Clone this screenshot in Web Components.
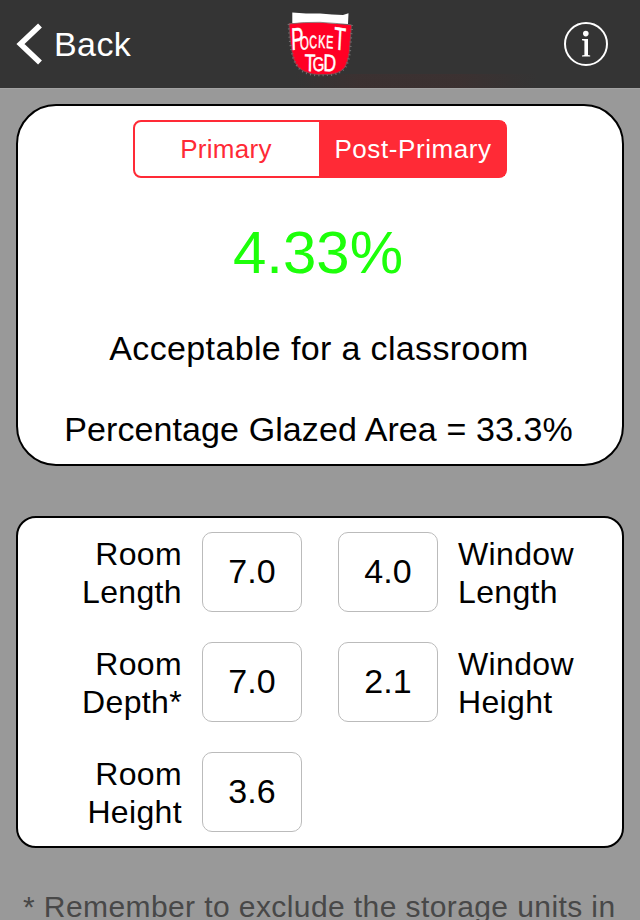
<!DOCTYPE html>
<html lang="en">
<head>
<meta charset="utf-8">
<title>Pocket TGD</title>
<style>
html,body{margin:0;height:920px;overflow:hidden;background:#999}
body{font-family:"Liberation Sans",Arial,sans-serif;color:#000}
</style>
</head>
<body>
<pocket-app></pocket-app>
<script>
const define = (name, html) => customElements.define(name, class extends HTMLElement {
  constructor() {
    super();
    const t = document.createElement('template');
    t.innerHTML = html;
    this.attachShadow({ mode: 'open' }).append(t.content.cloneNode(true));
  }
});

define('back-button', `
<style>
:host{display:flex;align-items:center;color:#fff;font-size:34px;line-height:40px;letter-spacing:.4px}
svg{display:block;width:26px;height:42px;margin-right:12px}
</style>
<svg viewBox="0 0 26 42"><path d="M24 2.5 4.5 21 24 39.5" fill="none" stroke="#fff" stroke-width="5.6"/></svg><slot></slot>`);

define('pocket-logo', `
<style>
:host{display:block;width:70px;height:70px}
svg{display:block;overflow:visible}
text{fill:#fff;stroke:#fff;stroke-width:.5;font-family:"Liberation Sans",Arial,sans-serif}
</style>
<svg width="70" height="70" viewBox="17 10 70 70">
<path d="M22.3 12.6 36 13.5 50 13.5 62 14.6 73 15 78.5 13.3 78 24 22.3 23.5Z" fill="#fff"/>
<path d="M19 23.5Q34 22.2 50 22.5 66 23.5 81.5 25 81 38 79.5 50 78.5 62 74.5 68 69 74 60 74.2L48 74.5Q37 74 31 69.5 23.5 65 22 52 20 38 19 23.5Z" fill="#ff0024"/>
<path d="M18.6 24Q34 22 50 22.3 66 23.3 81.5 24.8" fill="none" stroke="#77706f" stroke-width=".8"/>
<path d="M18.8 24Q19.5 45 23 57 26 67 33 71.5 41 75.5 50 75.2L61 74.9Q71 73.5 75.8 66.5 80 58 80.5 44L82 25" fill="none" stroke="#777" stroke-width="2.2" stroke-dasharray="1 3.2"/>
<path d="M19 24Q20 45 23 56 26 67 33 70.7 41 75 50 74.7L61 74.4Q71 73 75 66.5 79.5 58 80 44L81.5 25" fill="none" stroke="#7b5056" stroke-width=".7"/>
<text transform="scale(.6 1)"><tspan x="36" y="50" rotate="-3" font-size="31">P</tspan><tspan x="50.5" y="50" rotate="-4" font-size="19">O</tspan><tspan x="66" y="48.5" rotate="-3" font-size="18">C</tspan><tspan x="80" y="47.5" rotate="3" font-size="18">K</tspan><tspan x="93.5" y="48" rotate="3" font-size="18">E</tspan><tspan x="106" y="49" rotate="5" font-size="32">T</tspan></text>
<text transform="scale(.74 1)"><tspan x="46.5" y="71" rotate="1" font-size="24">T</tspan><tspan x="58" y="71.5" rotate="-3" font-size="20">G</tspan><tspan x="72" y="71" rotate="1" font-size="24">D</tspan></text>
</svg>`);

define('info-button', `
<style>
:host{display:flex;box-sizing:border-box;width:44px;height:44px;border:2px solid #fff;border-radius:50%;align-items:center;justify-content:center}
svg{display:block}
</style>
<svg width="40" height="40" viewBox="0 0 40 40" fill="#fff"><circle cx="19.8" cy="9.6" r="2.8"/><path d="M16 15h6v16l2.2.4v1H16v-1l2.4-.4V16.7L16 16.2Z"/></svg>`);

define('nav-bar', `
<style>
:host{display:grid;grid-template-columns:1fr auto 1fr;height:88px;box-sizing:border-box;padding:0 32px 0 16px;align-items:center;
background:linear-gradient(90deg,transparent 46%,#4a2c2c55 56%,#4a2c2c55 72%,transparent 84%) 0 100%/100% 14px no-repeat,#343434;box-shadow:0 1px #a3a3a3}
back-button{height:88px}
pocket-logo{margin-left:20px;margin-top:2px}
info-button{justify-self:end}
</style>
<back-button>Back</back-button><pocket-logo></pocket-logo><info-button></info-button>`);

define('segment-control', `
<style>
:host{display:grid;grid-template-columns:184px 1fr;box-sizing:border-box;width:374px;height:58px;border:2px solid #ff2a36;border-radius:8px;color:#ff2a36;font-size:26px;line-height:54px;text-align:center;letter-spacing:.3px}
.first{padding-right:2px}
.on{background:#ff2a36;color:#fff;letter-spacing:.58px;padding-left:2px}
</style>
<div class="first"><slot name="first"></slot></div><div class="on"><slot name="second"></slot></div>`);

define('round-panel', `
<style>:host{display:block;box-sizing:border-box;background:#fff;border:2px solid #000;border-radius:var(--radius,20px)}</style><slot></slot>`);

define('result-summary', `
<style>
:host{display:flex;flex-direction:column;align-items:center;padding-top:14px}
.value{font-size:60px;line-height:70px;color:#1dff0a;margin-top:40px;padding-right:4px}
.line{font-size:34px;line-height:40px;white-space:nowrap}
.verdict{margin-top:40px;letter-spacing:.36px;padding-right:2px}
.glazed{margin-top:41px;letter-spacing:.1px;padding-right:3px}
</style>
<slot name="mode"></slot>
<div class="value"><slot name="value"></slot></div>
<div class="line verdict"><slot name="verdict"></slot></div>
<div class="line glazed"><slot name="glazed"></slot></div>`);

define('measure-field', `
<style>
:host{display:flex;height:80px;gap:20px;align-items:center}
:host([trailing]){flex-direction:row-reverse;justify-content:flex-end}
.label{width:164px;text-align:right;font-size:32px;line-height:38px;letter-spacing:.35px;padding-top:2px}
:host([trailing]) .label{width:auto;text-align:left}
.box{box-sizing:border-box;width:100px;height:80px;border:1px solid #bbb;border-radius:10px;text-align:center;font-size:34px;line-height:76px;flex:none}
</style>
<div class="label"><slot></slot></div><div class="box"><slot name="value"></slot></div>`);

define('measure-grid', `
<style>:host{display:grid;grid-template-columns:284px 1fr;column-gap:36px;row-gap:30px;padding-top:14px}</style><slot></slot>`);

define('pocket-app', `
<style>
:host{display:flex;flex-direction:column;width:640px;height:920px;overflow:hidden}
main{padding:16px 16px 0;display:flex;flex-direction:column}
.result{height:362px;--radius:40px}
.measures{height:332px;margin-top:50px}
.note{margin-top:42px;padding-left:7px;font-size:30px;line-height:34px;letter-spacing:.41px;color:#484848;white-space:nowrap}
</style>
<nav-bar></nav-bar>
<main>
<round-panel class="result"><result-summary>
<segment-control slot="mode"><span slot="first">Primary</span><span slot="second">Post-Primary</span></segment-control>
<span slot="value">4.33%</span><span slot="verdict">Acceptable for a classroom</span><span slot="glazed">Percentage Glazed Area = 33.3%</span>
</result-summary></round-panel>
<round-panel class="measures"><measure-grid>
<measure-field>Room<br>Length<span slot="value">7.0</span></measure-field>
<measure-field trailing>Window<br>Length<span slot="value">4.0</span></measure-field>
<measure-field>Room<br>Depth*<span slot="value">7.0</span></measure-field>
<measure-field trailing>Window<br>Height<span slot="value">2.1</span></measure-field>
<measure-field>Room<br>Height<span slot="value">3.6</span></measure-field>
</measure-grid></round-panel>
<div class="note">* Remember to exclude the storage units in</div>
</main>`);
</script>
</body>
</html>
